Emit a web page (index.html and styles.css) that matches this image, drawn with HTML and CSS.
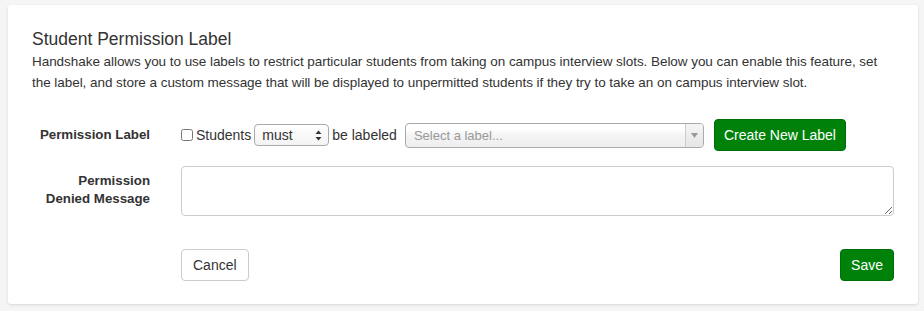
FILE: index.html
```html
<!DOCTYPE html>
<html lang="en">
<head>
<meta charset="utf-8">
<title>Student Permission Label</title>
<link rel="stylesheet" href="styles.css">
</head>
<body>
<div class="card">
  <h2 class="title">Student Permission Label</h2>
  <p class="desc">Handshake allows you to use labels to restrict particular students from taking on campus interview slots. Below you can enable this feature, set<br>the label, and store a custom message that will be displayed to unpermitted students if they try to take an on campus interview slot.</p>
  <div class="form">
    <div class="label label-mid">Permission Label</div>
    <div class="controls row1">
      <input type="checkbox" class="check">
      <span class="txt students">Students</span>
      <div class="mini-select">
        <span>must</span>
        <svg class="updown" width="7" height="11" viewBox="0 0 7 11"><path d="M3.5 0.5 L6.5 4 L0.5 4 Z" fill="#333"/><path d="M0.5 7 L6.5 7 L3.5 10.5 Z" fill="#333"/></svg>
      </div>
      <span class="txt">be labeled</span>
      <div class="chosen">
        <span class="placeholder">Select a label...</span>
        <span class="chosen-arrow"><svg width="7" height="5" viewBox="0 0 7 5"><path d="M0 0 L7 0 L3.5 5 Z" fill="#999"/></svg></span>
      </div>
      <button class="btn btn-green create">Create New Label</button>
    </div>
    <div class="label label-top">Permission<br>Denied Message</div>
    <div class="controls">
      <textarea class="message"></textarea>
    </div>
    <div class="spacer"></div>
    <div class="controls actions">
      <button class="btn btn-default">Cancel</button>
      <button class="btn btn-green">Save</button>
    </div>
  </div>
</div>
</body>
</html>
```

FILE: styles.css
```css
html, body {
  margin: 0;
  padding: 0;
  background: #f5f5f5;
}
body {
  font-family: "Liberation Sans", Arial, sans-serif;
  color: #333;
  padding: 5px 6px 7px 8px;
}
.card {
  background: #fff;
  border-radius: 3px;
  box-shadow: 0 1px 3px rgba(0,0,0,0.12);
  padding: 22px 24px 23px 24px;
}
.title {
  margin: 0;
  font-size: 17.5px;
  font-weight: 400;
  line-height: 24px;
  color: #333;
}
.desc {
  margin: 0;
  font-size: 13.5px;
  letter-spacing: -0.05px;
  line-height: 21px;
  color: #333;
  white-space: nowrap;
}
.form {
  margin-top: 26px;
  display: grid;
  grid-template-columns: 118px 1fr;
  column-gap: 31px;
}
.label {
  text-align: right;
  font-weight: 700;
  font-size: 13.3px;
  line-height: 18px;
  color: #333;
}
.label-mid {
  align-self: center;
}
.label-top {
  margin-top: 15px;
  padding-top: 6px;
}
.controls {
  display: flex;
  align-items: center;
}
.row1 {
  height: 32px;
}
.check {
  margin: 0 3px 0 0;
  width: 12px;
  height: 12px;
}
.txt {
  font-size: 14px;
  line-height: 18px;
}
.students {
  margin-right: 3px;
}
.mini-select {
  width: 75px;
  height: 22px;
  box-sizing: border-box;
  border: 1px solid #aaa;
  border-radius: 4px;
  background: linear-gradient(#fff, #f3f3f3);
  display: flex;
  align-items: center;
  justify-content: space-between;
  padding: 0 6px 0 7px;
  font-size: 14px;
  margin-right: 3px;
}
.chosen {
  margin-left: 8px;
  width: 299px;
  height: 25px;
  box-sizing: border-box;
  border: 1px solid #aaa;
  border-radius: 4px;
  background: linear-gradient(#fff 20%, #f4f4f4 50%, #eee 100%);
  display: flex;
  align-items: stretch;
  font-size: 13px;
}
.placeholder {
  flex: 1;
  color: #999;
  padding-left: 8px;
  display: flex;
  align-items: center;
}
.chosen-arrow {
  width: 17px;
  border-left: 1px solid #ccc;
  background: linear-gradient(#f4f4f4, #e6e6e6);
  border-radius: 0 3px 3px 0;
  display: flex;
  align-items: center;
  justify-content: center;
}
.btn {
  font-family: "Liberation Sans", Arial, sans-serif;
  font-size: 14px;
  height: 32px;
  border-radius: 4px;
  padding: 0 10px;
  cursor: pointer;
}
.btn-green {
  background: #00820a;
  border: 1px solid #006e08;
  color: #fff;
}
.btn-default {
  background: #fff;
  border: 1px solid #ccc;
  color: #333;
  padding: 0 11px;
}
.create {
  margin-left: 10px;
  padding: 0 9px;
}
.message {
  margin-top: 15px;
  width: 100%;
  height: 50px;
  box-sizing: border-box;
  border: 1px solid #ccc;
  border-radius: 4px;
  resize: vertical;
  font-family: inherit;
}
.actions {
  margin-top: 33px;
  justify-content: space-between;
}
```
